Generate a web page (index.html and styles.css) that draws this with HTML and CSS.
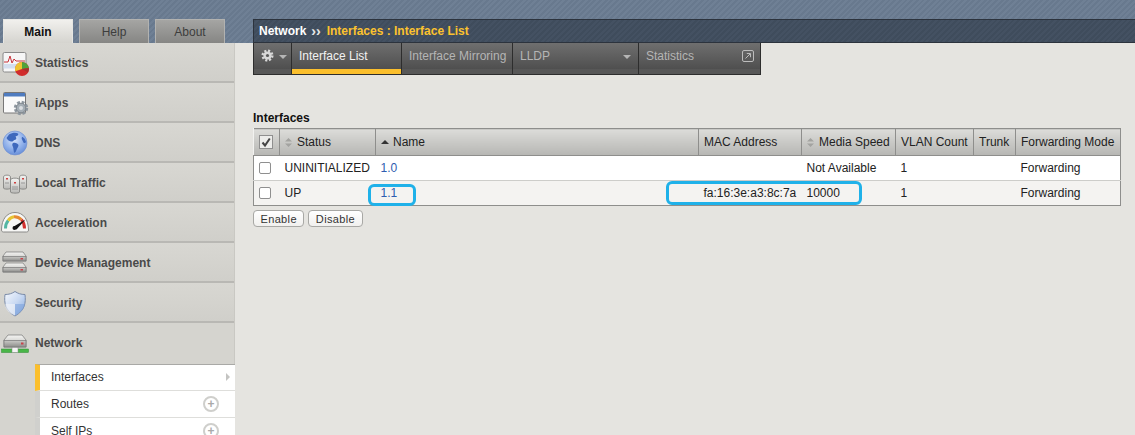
FILE: index.html
```html
<!DOCTYPE html>
<html lang="en">
<head>
  <meta charset="UTF-8">
  <meta name="viewport" content="width=device-width, initial-scale=1.0">
  <title>Network : Interfaces : Interface List</title>
  <link rel="stylesheet" href="styles.css">
</head>
<body>
<svg class="defs" width="0" height="0" aria-hidden="true">
  <defs>
    <linearGradient id="serverTop" x1="0" y1="0" x2="0" y2="1">
      <stop offset="0" stop-color="#f4f4f2"/>
      <stop offset="1" stop-color="#b9b9b6"/>
    </linearGradient>
    <linearGradient id="serverBody" x1="0" y1="0" x2="0" y2="1">
      <stop offset="0" stop-color="#c9c9c6"/>
      <stop offset="1" stop-color="#8d8d8b"/>
    </linearGradient>
    <radialGradient id="globeFill" cx="0.45" cy="0.35" r="0.75">
      <stop offset="0" stop-color="#dbe6fa"/>
      <stop offset="0.55" stop-color="#8fb0ea"/>
      <stop offset="1" stop-color="#5a82d2"/>
    </radialGradient>
    <linearGradient id="shieldFill" x1="0" y1="0" x2="1" y2="1">
      <stop offset="0" stop-color="#f6f8fc"/>
      <stop offset="0.5" stop-color="#c9d9f2"/>
      <stop offset="1" stop-color="#7fa6de"/>
    </linearGradient>
    <symbol id="sort" viewBox="0 0 7 9">
      <path d="M3.5 0 7 3.6H0zM3.5 9 0 5.4h7z" fill="#a3a3a0"/>
    </symbol>
  </defs>
</svg>

<div class="page">
  <aside class="sidebar">
    <div class="main-tabs">
      <a class="main-tab active">Main</a>
      <a class="main-tab">Help</a>
      <a class="main-tab">About</a>
    </div>
    <ul class="nav">
      <li class="nav-item">
        <svg class="nav-icon" viewBox="0 0 30 30">
          <rect x="3" y="4.500" width="23" height="19.500" rx="1.500" fill="#f6f6f6" stroke="#8a8a8a"/>
          <rect x="3.500" y="16" width="22" height="4.500" fill="#d3deee"/>
          <path d="M4 14h4l2-6 2 7 2-4 2 2h9" fill="none" stroke="#c8333a" stroke-width="1"/>
          <circle cx="22" cy="21" r="7" fill="#d12c2c"/>
          <path d="M22 21V14a7 7 0 0 1 6.900 6z" fill="#4fa23a"/>
          <path d="M22 21 28.900 20a7 7 0 0 1-1 4.500z" fill="#a8322c"/>
          <path d="M22 21V14a7 7 0 0 0-6.600 9.300z" fill="#eec32f"/>
        </svg>
        <span>Statistics</span>
      </li>
      <li class="nav-item">
        <svg class="nav-icon" viewBox="0 0 30 30">
          <rect x="3.500" y="4.500" width="22" height="20.500" rx="1" fill="#fafafa" stroke="#777"/>
          <rect x="4" y="5" width="21" height="3.500" fill="#4f7cc0"/>
          <circle cx="21" cy="20" r="5.400" fill="none" stroke="#8e979f" stroke-width="3.600" stroke-dasharray="2.600 1.640"/>
          <circle cx="21" cy="20" r="4.800" fill="#a4adb4" stroke="#7f878e"/>
          <circle cx="21" cy="20" r="2" fill="#d9dcdf"/>
        </svg>
        <span>iApps</span>
      </li>
      <li class="nav-item">
        <svg class="nav-icon" viewBox="0 0 30 30">
          <circle cx="15" cy="15" r="12" fill="url(#globeFill)" stroke="#6f8fd0" stroke-width="0.600"/>
          <path d="M9 6.500c3-2 7-2.500 9-1 1 1.500-1 2.500-2.500 3 1 1.500 1.500 3-1 3.500-1.500.5-1.500 2-3.500 1.500C9 13 7 11.500 6.500 10z" fill="#3f69bd"/>
          <path d="M13 15c2-.8 5 .4 5.500 2 .2 2-1.500 3-2 5-.5 2-2 3.500-2.500 2.500-.5-2-.5-4-1-5.500-1-1.500-1-3.500 0-4z" fill="#3f69bd"/>
          <path d="M22 9c1.500 0 3.500 2.500 4 5-1 2-2.500 1-3-.5s-2-3-1-4.500z" fill="#3f69bd"/>
        </svg>
        <span>DNS</span>
      </li>
      <li class="nav-item">
        <svg class="nav-icon" viewBox="0 0 30 30">
          <g stroke="#7b7b79" stroke-width="0.800">
            <path d="M3.500 9c0-2.500 7-2.500 7 0v11c0 1.500-7 1.500-7 0z" fill="url(#serverTop)"/>
            <path d="M19.500 9c0-2.500 7-2.500 7 0v11c0 1.500-7 1.500-7 0z" fill="url(#serverTop)"/>
            <path d="M10.500 12c0-2.500 9-2.500 9 0v12c0 1.500-9 1.500-9 0z" fill="url(#serverTop)"/>
          </g>
          <g fill="#cf3f3f">
            <rect x="6" y="10" width="2" height="1.500"/>
            <rect x="22" y="10" width="2" height="1.500"/>
            <rect x="14" y="14" width="2" height="1.500"/>
          </g>
          <path d="M12 19h6M12 21h6M5 15h4M21 15h4" stroke="#8c8c8a" stroke-width="0.800"/>
        </svg>
        <span>Local Traffic</span>
      </li>
      <li class="nav-item">
        <svg class="nav-icon" viewBox="0 0 30 30">
          <path d="M1.500 22C1.500 11 7 4.500 15 4.500S28.500 11 28.500 22c0 1.500-1 2-2 2h-23c-1 0-2-.5-2-2z" fill="#f7f7f5" stroke="#8a8a88"/>
          <path d="M5.500 20.500c0-3.500 1-6 2.700-8" fill="none" stroke="#54b6a2" stroke-width="3"/>
          <path d="M8.200 12.500C10 10 12 9 14 8.800" fill="none" stroke="#e6c534" stroke-width="3"/>
          <path d="M14 8.800c3-.2 5.500 1 7.500 3" fill="none" stroke="#e58a33" stroke-width="3"/>
          <path d="M21.500 11.800c2 2.200 3 5.200 3 8.700" fill="none" stroke="#d2312f" stroke-width="3"/>
          <path d="M13 19 25.500 11.500 16.500 21.500z" fill="#111"/>
          <circle cx="14.500" cy="20" r="2" fill="#111"/>
        </svg>
        <span>Acceleration</span>
      </li>
      <li class="nav-item">
        <svg class="nav-icon" viewBox="0 0 30 30">
          <g stroke="#777" stroke-width="0.700">
            <path d="M6 4h17l3 4v5H3V8z" fill="url(#serverTop)"/>
            <rect x="3" y="8.500" width="23" height="4.500" fill="url(#serverBody)"/>
            <path d="M6 15h17l3 4v5H3v-5z" fill="url(#serverTop)"/>
            <rect x="3" y="19.500" width="23" height="4.500" fill="url(#serverBody)"/>
          </g>
          <rect x="20.500" y="10" width="2.500" height="1.500" fill="#c9434b"/>
          <rect x="20.500" y="21" width="2.500" height="1.500" fill="#c9434b"/>
        </svg>
        <span>Device Management</span>
      </li>
      <li class="nav-item">
        <svg class="nav-icon" viewBox="0 0 30 30">
          <path d="M15 3.500c3 2 6 3 10 3 1 8 0 16-10 21.500C5 22.500 4 14.500 5 6.500c4 0 7-1 10-3z" fill="url(#shieldFill)" stroke="#7a8ba8"/>
          <path d="M15 4v12H5.200c.1 4.500 2 8.500 9.800 11.500z" fill="#eef1f7" opacity="0.700"/>
          <path d="M15 16h9.800c-.6 4.500-3 8-9.800 11.500z" fill="#7ea3dc" opacity="0.600"/>
        </svg>
        <span>Security</span>
      </li>
      <li class="nav-item open">
        <svg class="nav-icon" viewBox="0 0 30 30">
          <g stroke="#777" stroke-width="0.700">
            <path d="M8 7h14l4 5v7H4v-7z" fill="url(#serverTop)"/>
            <rect x="4" y="12.500" width="22" height="6.500" fill="url(#serverBody)"/>
          </g>
          <rect x="21" y="14.500" width="2.500" height="2" fill="#c9434b"/>
          <rect x="1.500" y="21" width="27" height="3.500" fill="#49b648" stroke="#2e8a32" stroke-width="0.500"/>
          <rect x="12" y="19.500" width="6" height="5" fill="#f4f4f4" stroke="#888" stroke-width="0.500"/>
        </svg>
        <span>Network</span>
      </li>
    </ul>
    <ul class="subnav">
      <li class="sub-item current">
        <span>Interfaces</span>
        <i class="sub-arrow"></i>
      </li>
      <li class="sub-item">
        <span>Routes</span>
        <i class="sub-plus">+</i>
      </li>
      <li class="sub-item">
        <span>Self IPs</span>
        <i class="sub-plus">+</i>
      </li>
    </ul>
  </aside>

  <main class="content">
    <div class="titlebar">
      <b class="crumb">Network</b>
      <b class="crumb-sep">››</b>
      <b class="crumb-page">Interfaces : Interface List</b>
    </div>
    <nav class="tabs">
      <a class="tab tab-gear">
        <svg class="gear" viewBox="0 0 14 14">
          <circle cx="7" cy="7" r="5.200" fill="none" stroke="#d8d8d8" stroke-width="2.600" stroke-dasharray="2.200 1.880"/>
          <circle cx="7" cy="7" r="4.400" fill="#d8d8d8"/>
          <circle cx="7" cy="7" r="1.700" fill="#5a5a5a"/>
        </svg>
        <i class="caret"></i>
      </a>
      <a class="tab tab-current">Interface List</a>
      <a class="tab tab-mirror">Interface Mirroring</a>
      <a class="tab tab-lldp">LLDP<i class="caret"></i></a>
      <a class="tab tab-stats">Statistics
        <svg class="popout" viewBox="0 0 12 12">
          <rect x="0.500" y="0.500" width="11" height="11" rx="1.500" fill="none" stroke="#bdbdbd"/>
          <path d="M3.500 8.500 8 4M4.800 3.500H8.500V7.200" fill="none" stroke="#bdbdbd"/>
        </svg>
      </a>
    </nav>

    <section class="panel">
      <h4 class="panel-title">Interfaces</h4>
      <div class="table-wrap">
        <table class="list">
          <colgroup>
            <col class="c-check"><col class="c-status"><col class="c-name"><col class="c-mac">
            <col class="c-speed"><col class="c-vlan"><col class="c-trunk"><col class="c-mode">
          </colgroup>
          <thead>
            <tr>
              <th class="cell-check">
                <span class="check check-head">
                  <svg viewBox="0 0 12 12"><path d="M2.500 6.500 5 9.500 9.800 2.500" fill="none" stroke="#444" stroke-width="2"/></svg>
                </span>
              </th>
              <th><svg class="sort"><use href="#sort"/></svg>Status</th>
              <th><i class="sort-up"></i>Name</th>
              <th>MAC Address</th>
              <th><svg class="sort"><use href="#sort"/></svg>Media Speed</th>
              <th>VLAN Count</th>
              <th>Trunk</th>
              <th>Forwarding Mode</th>
            </tr>
          </thead>
          <tbody>
            <tr>
              <td class="cell-check"><span class="check"></span></td>
              <td>UNINITIALIZED</td>
              <td><a class="link">1.0</a></td>
              <td></td>
              <td>Not Available</td>
              <td>1</td>
              <td></td>
              <td>Forwarding</td>
            </tr>
            <tr>
              <td class="cell-check"><span class="check"></span></td>
              <td>UP</td>
              <td><a class="link">1.1</a></td>
              <td>fa:16:3e:a3:8c:7a</td>
              <td>10000</td>
              <td>1</td>
              <td></td>
              <td>Forwarding</td>
            </tr>
          </tbody>
        </table>
        <div class="callout callout-name"></div>
        <div class="callout callout-mac"></div>
      </div>
      <div class="actions">
        <button class="btn">Enable</button>
        <button class="btn">Disable</button>
      </div>
    </section>
  </main>
</div>
</body>
</html>
```

FILE: styles.css
```css
* {
  box-sizing: border-box;
}
html, body {
  margin: 0;
  padding: 0;
  height: 100%;
  overflow: hidden;
}
body {
  background-color: #e5e4e0;
  color: #222;
  font-family: "Liberation Sans", Arial, sans-serif;
  font-size: 12px;
}
.defs {
  position: absolute;
}
.page {
  display: flex;
  height: 435px;
  padding-top: 19px;
  background-color: #e5e4e0;
  background-image: repeating-linear-gradient(135deg, #68798e 0, #68798e 2px, #6f8095 2px, #6f8095 4px);
  background-size: 100% 43px;
  background-repeat: no-repeat;
}

/* left column */
.sidebar {
  width: 235px;
  flex: none;
  display: flex;
  flex-direction: column;
}
.main-tabs {
  display: flex;
  gap: 6px;
  height: 24px;
  padding-left: 3px;
}
.main-tab {
  width: 70px;
  height: 24px;
  line-height: 24px;
  text-align: center;
  color: #3d3d3d;
  background: linear-gradient(#a5a5a3, #868684);
  border: 1px solid #b2b2b0;
  border-bottom: none;
}
.main-tab.active {
  font-weight: bold;
  color: #111;
  background: linear-gradient(#f1f0ed, #d5d4cf);
  border-color: #e6e6e2;
}
.nav {
  list-style: none;
  margin: 0;
  padding: 0;
  border-right: 1px solid #c9c8c3;
}
.nav-item {
  display: flex;
  align-items: center;
  gap: 5px;
  height: 40px;
  font-weight: bold;
  color: #4a4a4a;
  background: linear-gradient(#d8d7d2, #d0cfca);
  border-bottom: 1px solid #b9b8b4;
  box-shadow: inset 0 -1px 0 #b9b8b4, 0 1px 0 #eeeeea;
}
.nav-item.open {
  height: 41px;
  padding-bottom: 1px;
  border-bottom: none;
  box-shadow: none;
  background: #d5d4cf;
}
.nav-icon {
  width: 30px;
  height: 30px;
  flex: none;
}
.subnav {
  flex: 1;
  list-style: none;
  margin: 0;
  padding: 0 0 0 35px;
  background: #d5d4cf;
}
.sub-item {
  display: flex;
  align-items: center;
  justify-content: space-between;
  height: 27px;
  padding-right: 16px;
  padding-left: 11px;
  color: #333;
  background: #fff;
  border-left: 5px solid #d0d0cd;
  border-bottom: 1px solid #dededb;
}
.sub-item.current {
  border-left-color: #fbbf2d;
  border-top: 1px solid #a9a9a6;
  padding-right: 5px;
  padding-bottom: 1px;
}
.sub-arrow {
  width: 0;
  height: 0;
  border-left: 4px solid #c4c4c2;
  border-top: 4px solid transparent;
  border-bottom: 4px solid transparent;
}
.sub-plus {
  width: 16px;
  height: 16px;
  border: 2px solid #cfcfcc;
  border-radius: 50%;
  color: #aaa;
  font-style: normal;
  font-weight: bold;
  font-size: 12px;
  line-height: 12px;
  text-align: center;
}

/* right column */
.content {
  flex: 1;
  margin-left: 18px;
  min-width: 0;
}
.titlebar {
  display: flex;
  align-items: center;
  gap: 6px;
  height: 24px;
  padding-left: 5px;
  background-image: repeating-linear-gradient(135deg, #3f4c5c 0, #3f4c5c 2px, #445162 2px, #445162 4px);
  border: 1px solid #2c333d;
  border-right: none;
  font-size: 12px;
}
.crumb {
  color: #fff;
}
.crumb-sep {
  color: #e8e8e8;
  font-size: 14px;
  margin-left: -1px;
}
.crumb-page {
  color: #fcc22e;
}
.tabs {
  display: flex;
  width: 508px;
  height: 32px;
  background: #2d2d2d;
  padding: 0 1px 1px;
  gap: 1px;
}
.tab {
  display: flex;
  align-items: center;
  height: 31px;
  padding-bottom: 6px;
  color: #b5b5b5;
  background: linear-gradient(#6f6f6f 0, #4f4f4f 26px, #575757 26px, #575757 100%);
}
.tab-gear {
  width: 37px;
  padding-left: 7px;
}
.gear {
  width: 13px;
  height: 13px;
}
.caret {
  width: 0;
  height: 0;
  margin-left: 5px;
  margin-top: 2px;
  border-top: 4px solid #b5b5b5;
  border-left: 4px solid transparent;
  border-right: 4px solid transparent;
}
.tab-current {
  width: 109px;
  padding-left: 7px;
  color: #f2f2f2;
  background: linear-gradient(#6f6f6f 0, #4f4f4f 26px, #fbbf2d 26px, #fbbf2d 100%);
}
.tab-mirror {
  width: 110px;
  padding-left: 7px;
}
.tab-lldp {
  width: 125px;
  padding-left: 7px;
  justify-content: space-between;
  padding-right: 7px;
}
.tab-stats {
  flex: 1;
  padding-left: 7px;
  padding-right: 6px;
  justify-content: space-between;
}
.popout {
  width: 12px;
  height: 12px;
}
.panel {
  padding-top: 36px;
}
.panel-title {
  margin: 0 0 2px;
  font-size: 12px;
  line-height: 15px;
  color: #111;
}
.table-wrap {
  position: relative;
  width: 868px;
}
.list {
  width: 867px;
  table-layout: fixed;
  border-collapse: collapse;
  border: 1px solid #8e8e8c;
  font-size: 12px;
}
.c-check { width: 26px; }
.c-status { width: 96px; }
.c-name { width: 323px; }
.c-mac { width: 103px; }
.c-speed { width: 94px; }
.c-vlan { width: 78px; }
.c-trunk { width: 42px; }
.c-mode { width: 105px; }
.list th {
  height: 27px;
  padding: 0 4px 0 5px;
  text-align: left;
  font-weight: normal;
  color: #222;
  white-space: nowrap;
  background: linear-gradient(#dcdcd9, #b6b6b3);
  border-left: 1px solid #f2f2f0;
  border-right: 1px solid #8e8e8c;
  border-bottom: 1px solid #8e8e8c;
}
.list td {
  height: 25px;
  padding: 0 4px 0 5px;
  background: #fff;
  border-bottom: 1px solid #cdcdca;
  white-space: nowrap;
}
.list tbody tr:nth-child(even) td {
  background: #f4f3f1;
  border-bottom-color: #8e8e8c;
}
.list .cell-check {
  padding: 0 0 0 5px;
}
.check {
  display: block;
  width: 12px;
  height: 12px;
  background: #fff;
  border: 1px solid #8f8f8f;
  border-radius: 2px;
}
.check-head {
  width: 14px;
  height: 14px;
  background: #ececea;
  border-radius: 0;
}
.check-head svg {
  display: block;
  width: 12px;
  height: 12px;
}
.sort {
  width: 7px;
  height: 9px;
  margin-right: 5px;
  vertical-align: -1px;
}
.sort-up {
  display: inline-block;
  width: 0;
  height: 0;
  margin-right: 4px;
  vertical-align: 2px;
  border-bottom: 4px solid #333;
  border-left: 4px solid transparent;
  border-right: 4px solid transparent;
}
.link {
  color: #2f5db0;
}
.callout {
  position: absolute;
  border: 3px solid #1fb1e9;
  border-radius: 6px;
}
.callout-name {
  left: 115px;
  top: 56px;
  width: 48px;
  height: 22px;
}
.callout-mac {
  left: 413px;
  top: 53px;
  width: 196px;
  height: 24px;
}
.actions {
  display: flex;
  gap: 4px;
  margin-top: 4px;
}
.btn {
  height: 17px;
  padding: 0 6.5px;
  font-family: "Liberation Sans", Arial, sans-serif;
  font-size: 11px;
  letter-spacing: 0.35px;
  color: #333;
  background: linear-gradient(#ffffff, #f1f0ee);
  border: 1px solid #a8a8a5;
  border-radius: 4px;
}
```
